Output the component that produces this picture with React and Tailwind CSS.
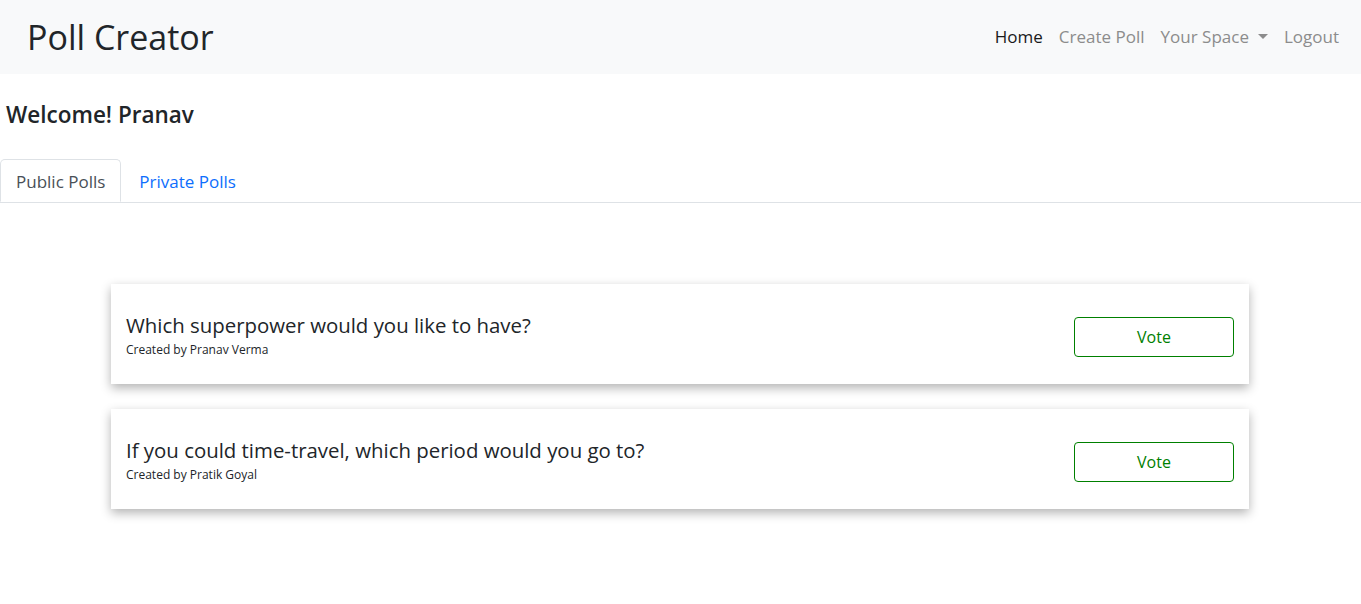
import React from "react";

const polls = [
  { q: "Which superpower would you like to have?", by: "Pranav Verma" },
  { q: "If you could time-travel, which period would you go to?", by: "Pratik Goyal" },
];

export default function App() {
  return (
    <div className="min-h-[604px] bg-white text-[#212529]" style={{ fontFamily: '"Open Sans", "Noto Sans", sans-serif' }}>
      <nav className="flex h-[74px] items-center justify-between bg-[#f8f9fa] pl-[27px] pr-[22px]">
        <div className="text-[34px] leading-none text-[#212529]">Poll Creator</div>
        <div className="flex items-center gap-4 text-[17px]">
          <span className="text-[#1a1a1a]">Home</span>
          <span className="text-[#8c8c8c]">Create Poll</span>
          <span className="flex items-center text-[#8c8c8c]">
            Your Space
            <svg className="ml-[9px]" width="10" height="6" viewBox="0 0 10 6"><path d="M0 0 L10 0 L5 5 Z" fill="#8c8c8c" /></svg>
          </span>
          <span className="text-[#8c8c8c]">Logout</span>
        </div>
      </nav>
      <h4 className="mt-[26px] pl-[6px] text-[22.5px] font-semibold leading-[30px]">Welcome! Pranav</h4>
      <div className="mt-[29px] flex border-b border-[#dee2e6]">
        <div className="-mb-px flex h-[43px] items-center rounded-t-[5px] border border-[#dee2e6] border-b-white bg-white px-[15px] pt-[3px] text-[17px] text-[#495057]">Public Polls</div>
        <div className="flex h-[43px] items-center px-[18px] pt-[3px] text-[17px] text-[#0d6efd]">Private Polls</div>
      </div>
      <div className="mx-[111px] mt-[81px] flex w-[1138px] flex-col gap-[25px]">
        {polls.map((p) => (
          <div key={p.q} className="flex h-[100px] items-center justify-between bg-white pl-[15px] pr-[15px] shadow-[0_4px_10px_rgba(0,0,0,0.3)]">
            <div className="flex flex-col">
              <div className="mb-[3px] text-[20.4px] font-medium leading-[28px]">{p.q}</div>
              <div className="text-[12px] leading-[16px]">Created by {p.by}</div>
            </div>
            <button className="mt-[6px] h-[40px] w-[160px] rounded-[4px] border border-[#008000] text-[16px] text-[#008000]">Vote</button>
          </div>
        ))}
      </div>
    </div>
  );
}
